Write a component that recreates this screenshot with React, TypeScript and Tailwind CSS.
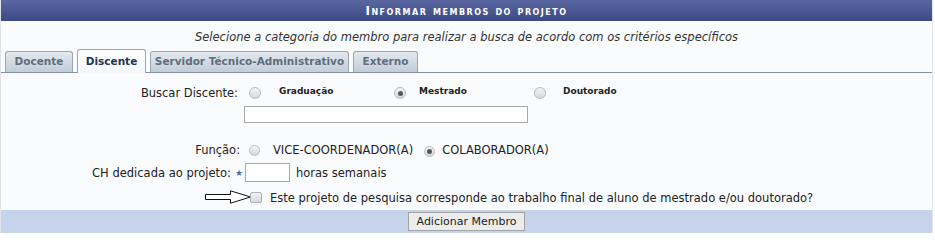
import React from "react"

function Radio({ checked = false, small = false }: { checked?: boolean; small?: boolean }) {
  return (
    <span
      className={`inline-flex items-center justify-center rounded-full border border-[#b9bcc0] bg-gradient-to-b from-[#f4f4f4] to-[#d6d8da] ${
        small ? "w-[11px] h-[11px]" : "w-[12px] h-[12px]"
      }`}
    >
      {checked && <span className="w-[5px] h-[5px] rounded-full bg-[#555]" />}
    </span>
  )
}

function Arrow() {
  return (
    <svg width="46" height="14" viewBox="0 0 46 14" className="block">
      <polygon
        points="0.5,4.5 25.5,4.5 25.5,0.8 45.5,7 25.5,13.2 25.5,9.5 0.5,9.5"
        fill="#fff"
        stroke="#111"
        strokeWidth="1"
      />
    </svg>
  )
}

const tabs = [
  { label: "Docente", w: "w-[68px]" },
  { label: "Discente", w: "w-[69px]", active: true },
  { label: "Servidor Técnico-Administrativo", w: "w-[199px]" },
  { label: "Externo", w: "w-[65px]" },
]

export default function App() {
  return (
    <div className="w-[935px] h-[246px] bg-white font-['DejaVu_Sans',Verdana,sans-serif] text-[11.5px] text-[#222]">
      <div className="w-[933px] border-x border-[#dfe4ea]">
        {/* Header */}
        <div className="h-[21px] flex items-center justify-center bg-gradient-to-b from-[#5a67a0] to-[#3c4a84] text-white font-bold text-[12px] tracking-[1.5px] [font-variant:small-caps]">
          Informar membros do projeto
        </div>

        <div className="bg-[#f9fbfd]">
          <div className="pt-[9px] pb-[5px] leading-[14px] text-center italic text-[#333]">
            Selecione a categoria do membro para realizar a busca de acordo com os critérios específicos
          </div>

          {/* Tabs */}
          <div className="flex items-end gap-[4px] pl-[4px] h-[24px] border-b border-[#8592a5]">
            {tabs.map((t) => (
              <div
                key={t.label}
                className={`${t.w} flex items-center justify-center rounded-t-[3px] border border-[#9aa6b4] font-bold text-[10.5px] ${
                  t.active
                    ? "h-[24px] -mb-px border-b-0 bg-gradient-to-b from-[#ffffff] to-[#f4f7fb] text-[#1d3552]"
                    : "h-[21px] border-b-0 bg-gradient-to-b from-[#e4e9ef] to-[#c3ccd7] text-[#5f6d7d]"
                }`}
              >
                {t.label}
              </div>
            ))}
          </div>

          {/* Buscar Discente */}
          <div className="pt-[12px] flex items-center leading-[16px]">
            <div className="w-[240px] pr-[3px] text-right">Buscar Discente:</div>
            <div className="flex items-center pl-[8px]">
              <div className="w-[145px] flex items-center">
                <Radio />
                <span className="ml-[18px] font-bold text-[9px] -mt-[4px]">Graduação</span>
              </div>
              <div className="w-[140px] flex items-center">
                <Radio checked />
                <span className="ml-[13px] font-bold text-[9px] -mt-[4px]">Mestrado</span>
              </div>
              <div className="flex items-center">
                <Radio />
                <span className="ml-[17px] font-bold text-[9px] -mt-[4px]">Doutorado</span>
              </div>
            </div>
          </div>
          <div className="mt-[5px] flex">
            <div className="w-[243px]" />
            <input className="w-[284px] h-[17px] border border-[#a9a9a9] bg-white outline-none" />
          </div>

          {/* Função */}
          <div className="mt-[19px] flex items-center leading-[16px]">
            <div className="w-[240px] pr-[1px] text-right">Função:</div>
            <div className="flex items-center pl-[8px]">
              <Radio small />
              <span className="ml-[13px]">VICE-COORDENADOR(A)</span>
              <span className="ml-[11px]">
                <Radio small checked />
              </span>
              <span className="ml-[7px]">COLABORADOR(A)</span>
            </div>
          </div>

          {/* CH */}
          <div className="mt-[5px] flex items-center leading-[16px]">
            <div className="w-[244px] pr-[2px] flex items-center justify-end">
              <span>CH dedicada ao projeto:</span>
              <span className="ml-[4px] text-[9px] text-[#4f6fa8]">★</span>
            </div>
            <input className="w-[45px] h-[19px] border border-[#a9a9a9] bg-white outline-none" />
            <span className="ml-[6px]">horas semanais</span>
          </div>

          {/* Checkbox */}
          <div className="mt-[6px] pb-[4px] flex items-center leading-[16px]">
            <div className="w-[204px]" />
            <Arrow />
            <span className="-ml-[1px] w-[12px] h-[11px] rounded-[2px] border border-[#aeb1b5] bg-gradient-to-b from-[#f2f2f2] to-[#d4d6d8]" />
            <span className="ml-[8px] mt-[2px]">
              Este projeto de pesquisa corresponde ao trabalho final de aluno de mestrado e/ou doutorado?
            </span>
          </div>
        </div>

        {/* Footer */}
        <div className="h-[23px] bg-[#c5d3eb] flex items-center justify-center">
          <button className="w-[117px] h-[19px] border border-[#a3a3a3] bg-[#ececec] text-[11px] text-[#222] leading-none">
            Adicionar Membro
          </button>
        </div>
      </div>
    </div>
  )
}
